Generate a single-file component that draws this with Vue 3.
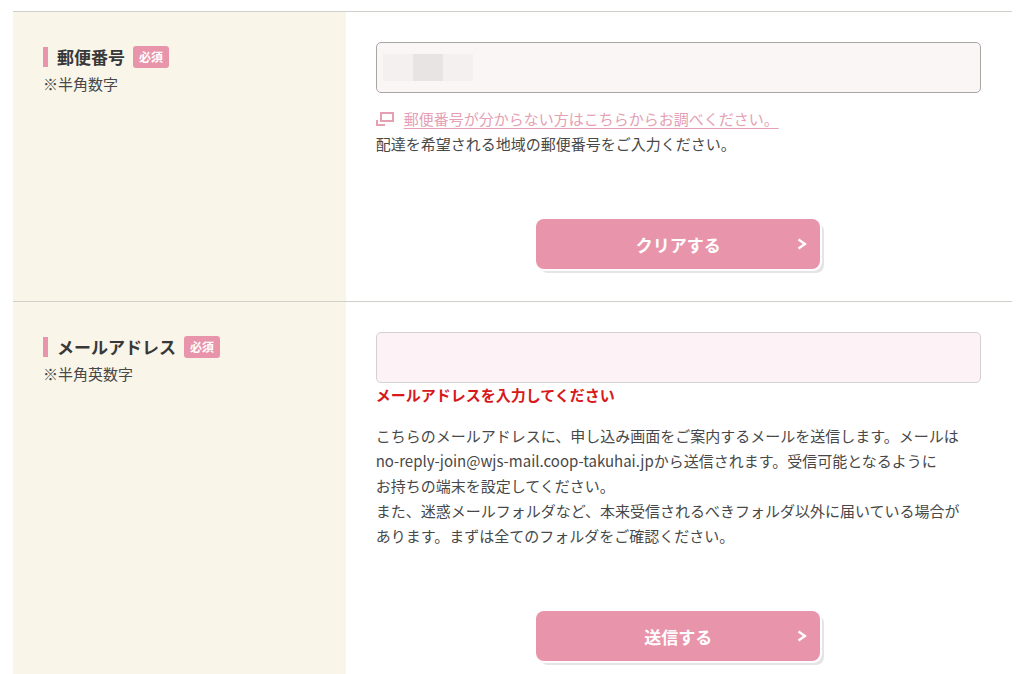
<template>
  <form class="entry-form" novalidate @submit.prevent="handleSubmit">
    <div class="row">
      <div class="row-head">
        <div class="title">
          <label for="zip">郵便番号</label>
          <span class="required">必須</span>
        </div>
        <p class="note">※半角数字</p>
      </div>
      <div class="row-body">
        <div class="zip-field">
          <input id="zip" v-model="formData.zip" type="text" inputmode="numeric" class="field filled" />
          <div class="mask">
            <span></span>
            <span class="dark"></span>
            <span></span>
          </div>
        </div>
        <div class="help">
          <a href="#" class="link">
            <svg width="18" height="14" viewBox="0 0 18 14" fill="none" stroke="currentColor" stroke-width="2">
              <path d="M5 1h12v8H5z" />
              <path d="M1 8v5h8" />
            </svg>
            <span>郵便番号が分からない方はこちらからお調べください。</span>
          </a>
          <p>配達を希望される地域の郵便番号をご入力ください。</p>
        </div>
        <button type="button" class="btn" @click="clearZip">
          クリアする
          <svg class="arrow" width="10" height="12" viewBox="0 0 10 12" fill="none" stroke="currentColor" stroke-width="2.2">
            <path d="M1.500 1.500L8 6l-6.500 4.500" />
          </svg>
        </button>
      </div>
    </div>

    <div class="row">
      <div class="row-head">
        <div class="title">
          <label for="mail">メールアドレス</label>
          <span class="required">必須</span>
        </div>
        <p class="note">※半角英数字</p>
      </div>
      <div class="row-body">
        <input id="mail" v-model="formData.mail" type="email" class="field invalid" />
        <p class="error">メールアドレスを入力してください</p>
        <p class="guide">
          こちらのメールアドレスに、申し込み画面をご案内するメールを送信します。メールは<br />
          no-reply-join@wjs-mail.coop-takuhai.jpから送信されます。受信可能となるように<br />
          お持ちの端末を設定してください。<br />
          また、迷惑メールフォルダなど、本来受信されるべきフォルダ以外に届いている場合が<br />
          あります。まずは全てのフォルダをご確認ください。
        </p>
        <button type="submit" class="btn">
          送信する
          <svg class="arrow" width="10" height="12" viewBox="0 0 10 12" fill="none" stroke="currentColor" stroke-width="2.2">
            <path d="M1.500 1.500L8 6l-6.500 4.500" />
          </svg>
        </button>
      </div>
    </div>
  </form>
</template>

<script setup>
import { ref } from 'vue'

const emit = defineEmits(['submit'])

const formData = ref({
  zip: '',
  mail: ''
})

const clearZip = () => {
  formData.value.zip = ''
}

const handleSubmit = () => {
  emit('submit', formData.value)
}
</script>

<style>
body {
  margin: 0;
  background: #fff;
}
</style>

<style scoped>
.entry-form {
  display: flex;
  flex-direction: column;
  box-sizing: border-box;
  min-height: 100vh;
  padding: 11px 12px 0 13px;
  color: #484848;
  font-family: "Noto Sans CJK JP", sans-serif;
  font-size: 15px;
  line-height: 25px;
}

p {
  margin: 0;
}

.row {
  display: flex;
  border-top: 1px solid #d0cfca;
}

.row:last-child {
  flex: 1;
}

.row-head {
  flex: none;
  box-sizing: border-box;
  width: 33.3%;
  padding: 32px 30px;
  background: #f9f5e8;
}

.row-body {
  flex: 1;
  box-sizing: border-box;
  min-width: 0;
  padding: 30px 31px 32px 30px;
}

.row:last-child .row-body {
  padding-bottom: 12px;
}

.title {
  display: flex;
  align-items: center;
  margin-bottom: 2px;
}

.title::before {
  content: "";
  width: 5px;
  height: 20px;
  margin-right: 9px;
  background: #e895ab;
}

.title label {
  color: #383838;
  font-size: 17px;
  font-weight: bold;
}

.required {
  margin-left: 8px;
  padding: 0 6px;
  border-radius: 3px;
  background: #e895ab;
  color: #fff;
  font-size: 12px;
  font-weight: bold;
  line-height: 22px;
}

.field {
  display: block;
  box-sizing: border-box;
  width: 100%;
  height: 51px;
  padding: 0 12px;
  border: 1px solid #d4d0d4;
  border-radius: 5px;
  color: #484848;
  font: inherit;
}

.filled {
  border-color: #aaa6a4;
  background: #faf6f5;
}

.invalid {
  background: #fdf2f6;
}

.zip-field {
  position: relative;
}

.mask {
  position: absolute;
  top: 12px;
  left: 7px;
  display: flex;
  pointer-events: none;
}

.mask span {
  width: 30px;
  height: 27px;
  background: #f4f0ef;
}

.mask .dark {
  background: #e8e4e3;
}

.help {
  margin-top: 13px;
}

.link {
  display: flex;
  align-items: center;
  gap: 10px;
  color: #e5a0b3;
  text-decoration: none;
}

.link span {
  text-decoration: underline;
  text-underline-offset: 3px;
}

.error {
  color: #d7191c;
  font-weight: bold;
  line-height: 24px;
}

.guide {
  margin-top: 16px;
  white-space: nowrap;
}

.btn {
  position: relative;
  display: block;
  width: 284px;
  height: 50px;
  margin: 63px auto 0;
  border: none;
  border-radius: 8px;
  background: #e895ab;
  box-shadow: 1px 1px 0 1px #fff, 4px 4px 0 #e6e4e4;
  color: #fff;
  font-family: inherit;
  font-size: 17px;
  font-weight: bold;
  cursor: pointer;
}

.arrow {
  position: absolute;
  top: 19px;
  right: 13px;
}
</style>
